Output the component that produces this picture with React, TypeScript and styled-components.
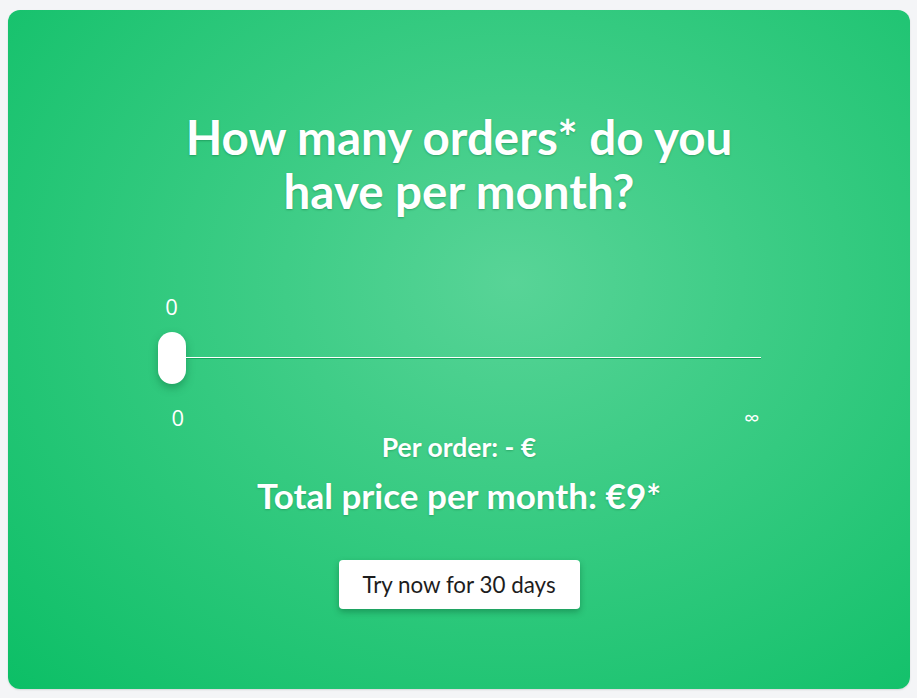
import * as React from "react";
import styled, { createGlobalStyle } from "styled-components";

const GlobalStyle = createGlobalStyle`
  html, body {
    margin: 0;
    padding: 0;
    background: #f4f5f7;
  }
  body {
    padding: 10px 7px 9px 8px;
    font-family: Lato, "Noto Sans", sans-serif;
  }
`;

const Card = styled.section`
  height: 679px;
  box-sizing: border-box;
  border-radius: 12px;
  background: radial-gradient(ellipse farthest-corner at 56% 40%, #58d497 0%, #3fcd87 32%, #0cbf66 100%);
  box-shadow: 0 1px 2px rgba(0, 0, 0, 0.12);
  display: flex;
  flex-direction: column;
  align-items: center;
  padding-top: 100px;
  color: #fff;
`;

const Title = styled.h1`
  margin: 0;
  width: 620px;
  text-align: center;
  font-size: 47.5px;
  line-height: 54px;
  font-weight: 700;
  text-shadow: 0 1px 2px rgba(0, 90, 40, 0.35);
`;

const SliderBlock = styled.div`
  width: 603px;
  margin-top: 74px;
  display: flex;
  flex-direction: column;
`;

const ValueLabel = styled.div`
  width: 28px;
  text-align: center;
  font-family: "Open Sans", sans-serif;
  font-size: 22px;
  line-height: 28px;
`;

const Track = styled.div`
  height: 52px;
  margin-top: 12px;
  display: flex;
  align-items: center;
`;

const Line = styled.div`
  flex: 1;
  height: 1px;
  background: #fff;
  border-bottom: 1px solid #14a85d;
`;

const Thumb = styled.div`
  width: 28px;
  height: 52px;
  border-radius: 14px;
  background: #fff;
  box-shadow: 0 4px 8px rgba(0, 80, 40, 0.35);
  flex-shrink: 0;
`;

const Scale = styled.div`
  display: flex;
  justify-content: space-between;
  padding: 0 1px 0 14px;
  margin-top: 19px;
  font-family: "Open Sans", sans-serif;
  font-size: 22px;
  line-height: 28px;
`;

const PerOrder = styled.div`
  margin-top: 1px;
  font-size: 26.5px;
  line-height: 30px;
  font-weight: 700;
  text-shadow: 0 1px 2px rgba(0, 90, 40, 0.3);
`;

const Total = styled.div`
  margin-top: 13px;
  font-size: 35px;
  line-height: 40px;
  font-weight: 700;
  text-shadow: 0 1px 2px rgba(0, 90, 40, 0.3);
`;

const Button = styled.button`
  margin-top: 45px;
  width: 241px;
  height: 49px;
  border: none;
  border-radius: 4px;
  background: #fff;
  color: #1d1d1d;
  font-family: Lato, sans-serif;
  font-size: 22.4px;
  box-shadow: 0 3px 6px rgba(0, 70, 35, 0.35);
  cursor: pointer;
`;

export default function App() {
  return (
    <>
      <GlobalStyle />
      <Card>
        <Title>How many orders* do you have per month?</Title>
        <SliderBlock>
          <ValueLabel>0</ValueLabel>
          <Track>
            <Thumb />
            <Line />
          </Track>
          <Scale>
            <span>0</span>
            <span>∞</span>
          </Scale>
        </SliderBlock>
        <PerOrder>Per order: - €</PerOrder>
        <Total>Total price per month: €9*</Total>
        <Button>Try now for 30 days</Button>
      </Card>
    </>
  );
}
